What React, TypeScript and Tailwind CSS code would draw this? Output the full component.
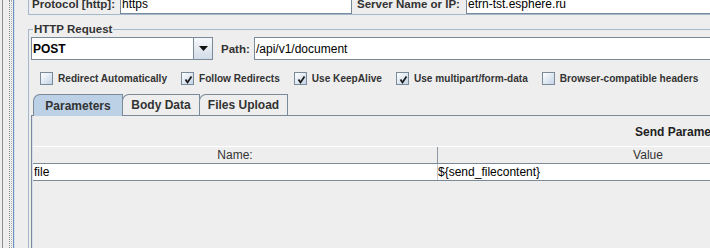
import React from "react";

const boxCls =
  "relative flex h-[13px] w-[13px] shrink-0 items-center justify-center border border-[#7a8a99] bg-linear-to-br from-[#ffffff] to-[#c4d4e6]";

function Check({ label, checked }: { label: string; checked?: boolean }) {
  return (
    <div className="flex shrink-0 items-center gap-[5px]">
      <div className={boxCls}>
        {checked && (
          <svg width="11" height="11" viewBox="0 0 11 11" className="absolute left-px top-px">
            <path d="M2.5 5.5 L4.5 8.5 L8.5 2.5" fill="none" stroke="#1e1e1e" strokeWidth="1.8" />
          </svg>
        )}
      </div>
      <span className="whitespace-nowrap text-[10.1px] font-bold text-[#333333]">{label}</span>
    </div>
  );
}

function Tab({ label, width, selected }: { label: string; width: string; selected?: boolean }) {
  return (
    <div
      className={
        "flex shrink-0 items-center justify-center rounded-tl-[7px] border border-b-0 border-[#7a8a99] font-bold text-[#333333] " +
        width +
        (selected ? " relative z-10 -mb-px h-[22px] bg-[#bcd1e6]" : " -ml-px h-[21px] bg-[#eeeeee]")
      }
    >
      {label}
    </div>
  );
}

export default function App() {
  return (
    <div className="flex h-[248px] w-[710px] overflow-hidden bg-[#eeeeee] font-['Liberation_Sans',Arial,sans-serif] text-[12px] leading-[14px] text-black">
      {/* split pane divider */}
      <div className="flex h-full w-[16px] shrink-0 pl-[2px]">
        <div className="w-px bg-[#8c8c8c]" />
        <div className="ml-[6px] w-px border-l border-dotted border-[#8a8a8a]" />
        <div className="ml-[1px] w-px border-l border-dotted border-[#b0b0b0]" />
        <div className="ml-[1px] w-px bg-[#6f8fc0]" />
        <div className="w-px bg-[#d6e0ec]" />
      </div>

      <div className="flex w-[880px] shrink-0 flex-col">
        {/* protocol / server row */}
        <div className="-mt-[6px] ml-[12px] flex h-[23px] flex-col border-b border-l border-[#a3b8cc]">
          <div className="flex h-[20px] items-center pl-[3px]">
            <span className="w-[88px] shrink-0 whitespace-nowrap text-[11.5px] font-bold text-[#333333]">
              Protocol [http]:
            </span>
            <div className="flex h-[20px] w-[232px] shrink-0 items-center border border-[#7a8a99] bg-white pl-[1px]">
              https
            </div>
            <span className="ml-[5px] w-[107px] shrink-0 whitespace-nowrap text-[11.5px] font-bold text-[#333333]">
              Server Name or IP:
            </span>
            <div className="ml-[2px] flex h-[20px] flex-1 items-center border border-[#7a8a99] bg-white pl-[1px]">
              etrn-tst.esphere.ru
            </div>
          </div>
        </div>

        {/* HTTP Request */}
        <fieldset className="ml-[12px] mt-[7px] h-[300px] border border-[#a3b8cc] pl-[2px]">
          <legend className="ml-[2px] px-[1px] text-[11.5px] font-bold text-[#333333]">HTTP Request</legend>

          <div className="mt-[1px] flex h-[23px] items-center">
            <div className="flex h-[23px] w-[182px] shrink-0 border border-[#7a8a99] bg-white">
              <div className="flex flex-1 items-center pl-[1px] font-bold">POST</div>
              <div className="flex w-[19px] items-center justify-center border-l border-[#7a8a99] bg-linear-to-b from-[#f6f8fb] to-[#d2dce8]">
                <svg width="9" height="5" viewBox="0 0 9 5">
                  <path d="M0 0 H9 L4.5 5 Z" fill="#111" />
                </svg>
              </div>
            </div>
            <span className="ml-[8px] w-[27px] shrink-0 text-[11.5px] font-bold text-[#333333]">Path:</span>
            <div className="ml-[6px] flex h-[23px] flex-1 items-center border border-[#7a8a99] bg-white pl-[1px]">
              /api/v1/document
            </div>
          </div>

          <div className="mt-[12px] flex h-[13px] items-center gap-[14px] pl-[9px]">
            <Check label="Redirect Automatically" />
            <Check label="Follow Redirects" checked />
            <Check label="Use KeepAlive" checked />
            <Check label="Use multipart/form-data" checked />
            <Check label="Browser-compatible headers" />
          </div>

          {/* tabs */}
          <div className="mt-[9px] flex h-[21px] items-end pl-[2px]">
            <Tab label="Parameters" width="w-[90px]" selected />
            <Tab label="Body Data" width="w-[78px]" />
            <Tab label="Files Upload" width="w-[89px]" />
          </div>
          <div className="flex h-[200px] border-l border-t border-[#7a8a99]">
            <div className="flex flex-1 flex-col border-l border-[#d6e0ec]">
              <div className="ml-[602px] mt-[9px] whitespace-nowrap font-bold text-[#222222]">
                Send Parameters With the Request:
              </div>
              <div className="mt-[7px] flex h-[18px] border-b border-t border-b-[#7a8a99] border-t-white text-[#333333]">
                <div className="flex w-[405px] items-center justify-center border-r border-[#8c98a4]">Name:</div>
                <div className="flex w-[420px] items-center justify-center">Value</div>
              </div>
              <div className="flex h-[17px] border-b border-[#7a8a99] bg-white">
                <div className="flex w-[405px] items-center border-r border-[#c8c8c8] pl-[1px]">file</div>
                <div className="flex w-[420px] items-center">{"${send_filecontent}"}</div>
              </div>
            </div>
          </div>
        </fieldset>
      </div>
    </div>
  );
}
